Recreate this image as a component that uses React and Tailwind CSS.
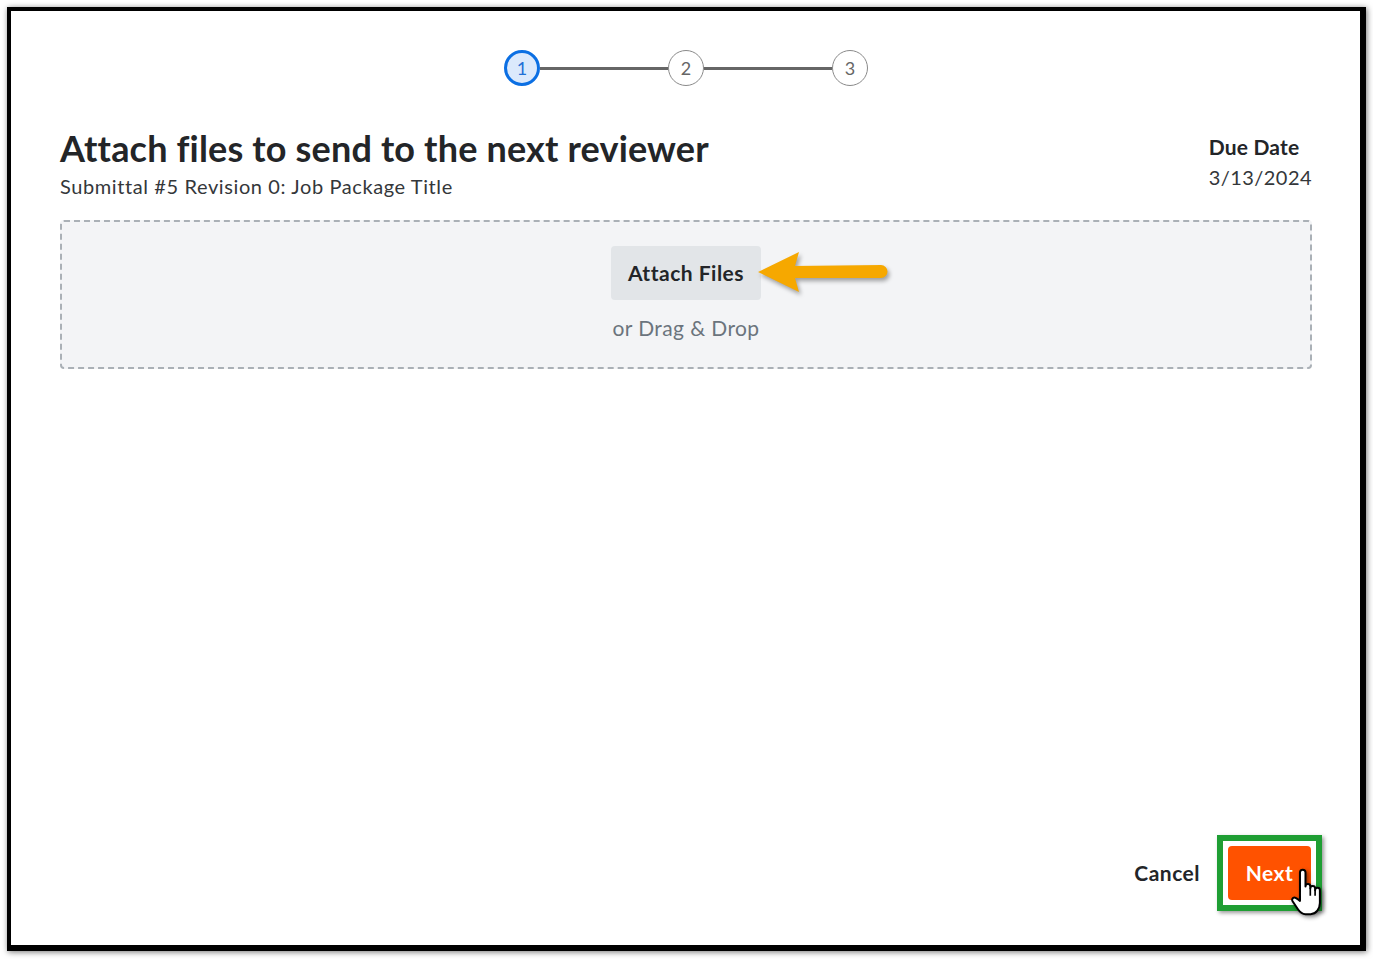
import React from 'react';

const Step = ({ n, active }) => (
    <div
        className={
            active
                ? 'w-[36px] h-[36px] rounded-full border-[3px] border-[#0b6fe3] bg-[#dbe9fc] text-[#1f6fd6] flex items-center justify-center text-[18px]'
                : 'w-[36px] h-[36px] rounded-full border border-[#8a8a8a] bg-white text-[#666] flex items-center justify-center text-[18px]'
        }
    >
        {n}
    </div>
);

const HandCursor = () => (
    <svg width="37" height="48" viewBox="0 0 20 26" className="drop-shadow-[2px_2px_2px_rgba(0,0,0,0.45)]">
        <path
            d="M7 2.5 a1.5 1.5 0 0 1 3 0 V10 a1.3 1.3 0 0 1 2.6 0 V11 a1.3 1.3 0 0 1 2.6 0 V12 a1.3 1.3 0 0 1 2.6 0 V19 c0 3 -2 6 -5 6 H10 c-2 0 -3 -1 -4 -2.5 L3 18 c-0.6 -1 0 -2 1 -2 c0.7 0 1.3 0.5 3 1.8 V2.5 Z"
            fill="#fff"
            stroke="#000"
            strokeWidth="1.1"
            strokeLinejoin="round"
        />
        <path d="M12.6 11 V15 M15.2 12 V15" stroke="#000" strokeWidth="0.9" />
    </svg>
);

const Arrow = () => (
    <svg width="136" height="50" viewBox="0 0 136 50" className="drop-shadow-[2px_3px_2px_rgba(0,0,0,0.35)]">
        <path d="M1 23 L42 3 L38 17 L124 16 a6.5 6.5 0 0 1 0 13 L38 29 L42 43 Z" fill="#f6a800" strokeLinejoin="round" />
    </svg>
);

const App = () => {
    return (
        <div className="w-[1373px] h-[959px] bg-white pl-[7px] pt-[7px] font-['Lato','Liberation_Sans',sans-serif]">
            <div className="w-[1359px] h-[944px] border-l-4 border-t-4 border-r-[6px] border-b-[6px] border-black bg-white shadow-[1px_1px_6px_rgba(0,0,0,0.55)] flex flex-col pl-[49px] pr-[48px]">
                {/* Pasos */}
                <div className="flex items-center justify-center pt-[39px]">
                    <Step n="1" active />
                    <div className="w-[128px] h-[3px] bg-[#666]" />
                    <Step n="2" />
                    <div className="w-[128px] h-[3px] bg-[#666]" />
                    <Step n="3" />
                </div>

                <div className="flex justify-between items-start mt-[40px]">
                    <div>
                        <h1 className="text-[36px] leading-[44px] font-bold tracking-[0.17px] text-[#232528]">
                            Attach files to send to the next reviewer
                        </h1>
                        <p className="mt-[4px] text-[20px] leading-[24px] tracking-[0.6px] text-[#34373a]">
                            Submittal #5 Revision 0: Job Package Title
                        </p>
                    </div>
                    <div className="pt-[9px] text-[20px] leading-[24px] text-[#232528] -ml-[2px]">
                        <div className="font-bold text-[21px] tracking-[0.2px]">Due Date</div>
                        <div className="mt-[6px] tracking-[0.45px] text-[#34373a]">3/13/2024</div>
                    </div>
                </div>

                {/* Zona de adjuntos */}
                <div className="mt-[22px] h-[149px] border-2 border-dashed border-[#aab0b6] rounded-[4px] bg-[#f3f4f6] flex flex-col items-center pt-[24px]">
                    <div className="relative">
                        <button className="w-[150px] h-[54px] rounded-[4px] bg-[#e2e5e8] text-[21px] tracking-[0.5px] font-bold text-[#232528]">
                            Attach Files
                        </button>
                        <div className="absolute left-[146px] top-[3px]">
                            <Arrow />
                        </div>
                    </div>
                    <div className="mt-[15px] text-[21px] leading-[26px] tracking-[0.4px] text-[#6b747d]">or Drag &amp; Drop</div>
                </div>

                <div className="flex-1" />

                <div className="flex justify-end items-center pb-[45px] gap-[28px]">
                    <button className="text-[21px] tracking-[0.5px] font-bold text-[#232528]">Cancel</button>
                    <div className="relative mr-[1px]">
                        <button className="w-[83px] h-[54px] rounded-[4px] bg-[#ff5200] text-white text-[21px] tracking-[0.5px] font-bold">
                            Next
                        </button>
                        <div className="absolute -inset-[11px] border-[6px] border-[#1f9e33] shadow-[2px_2px_4px_rgba(0,0,0,0.4)] pointer-events-none" />
                        <div className="absolute left-[59px] top-[22px]">
                            <HandCursor />
                        </div>
                    </div>
                </div>
            </div>
        </div>
    );
};

export default App;
